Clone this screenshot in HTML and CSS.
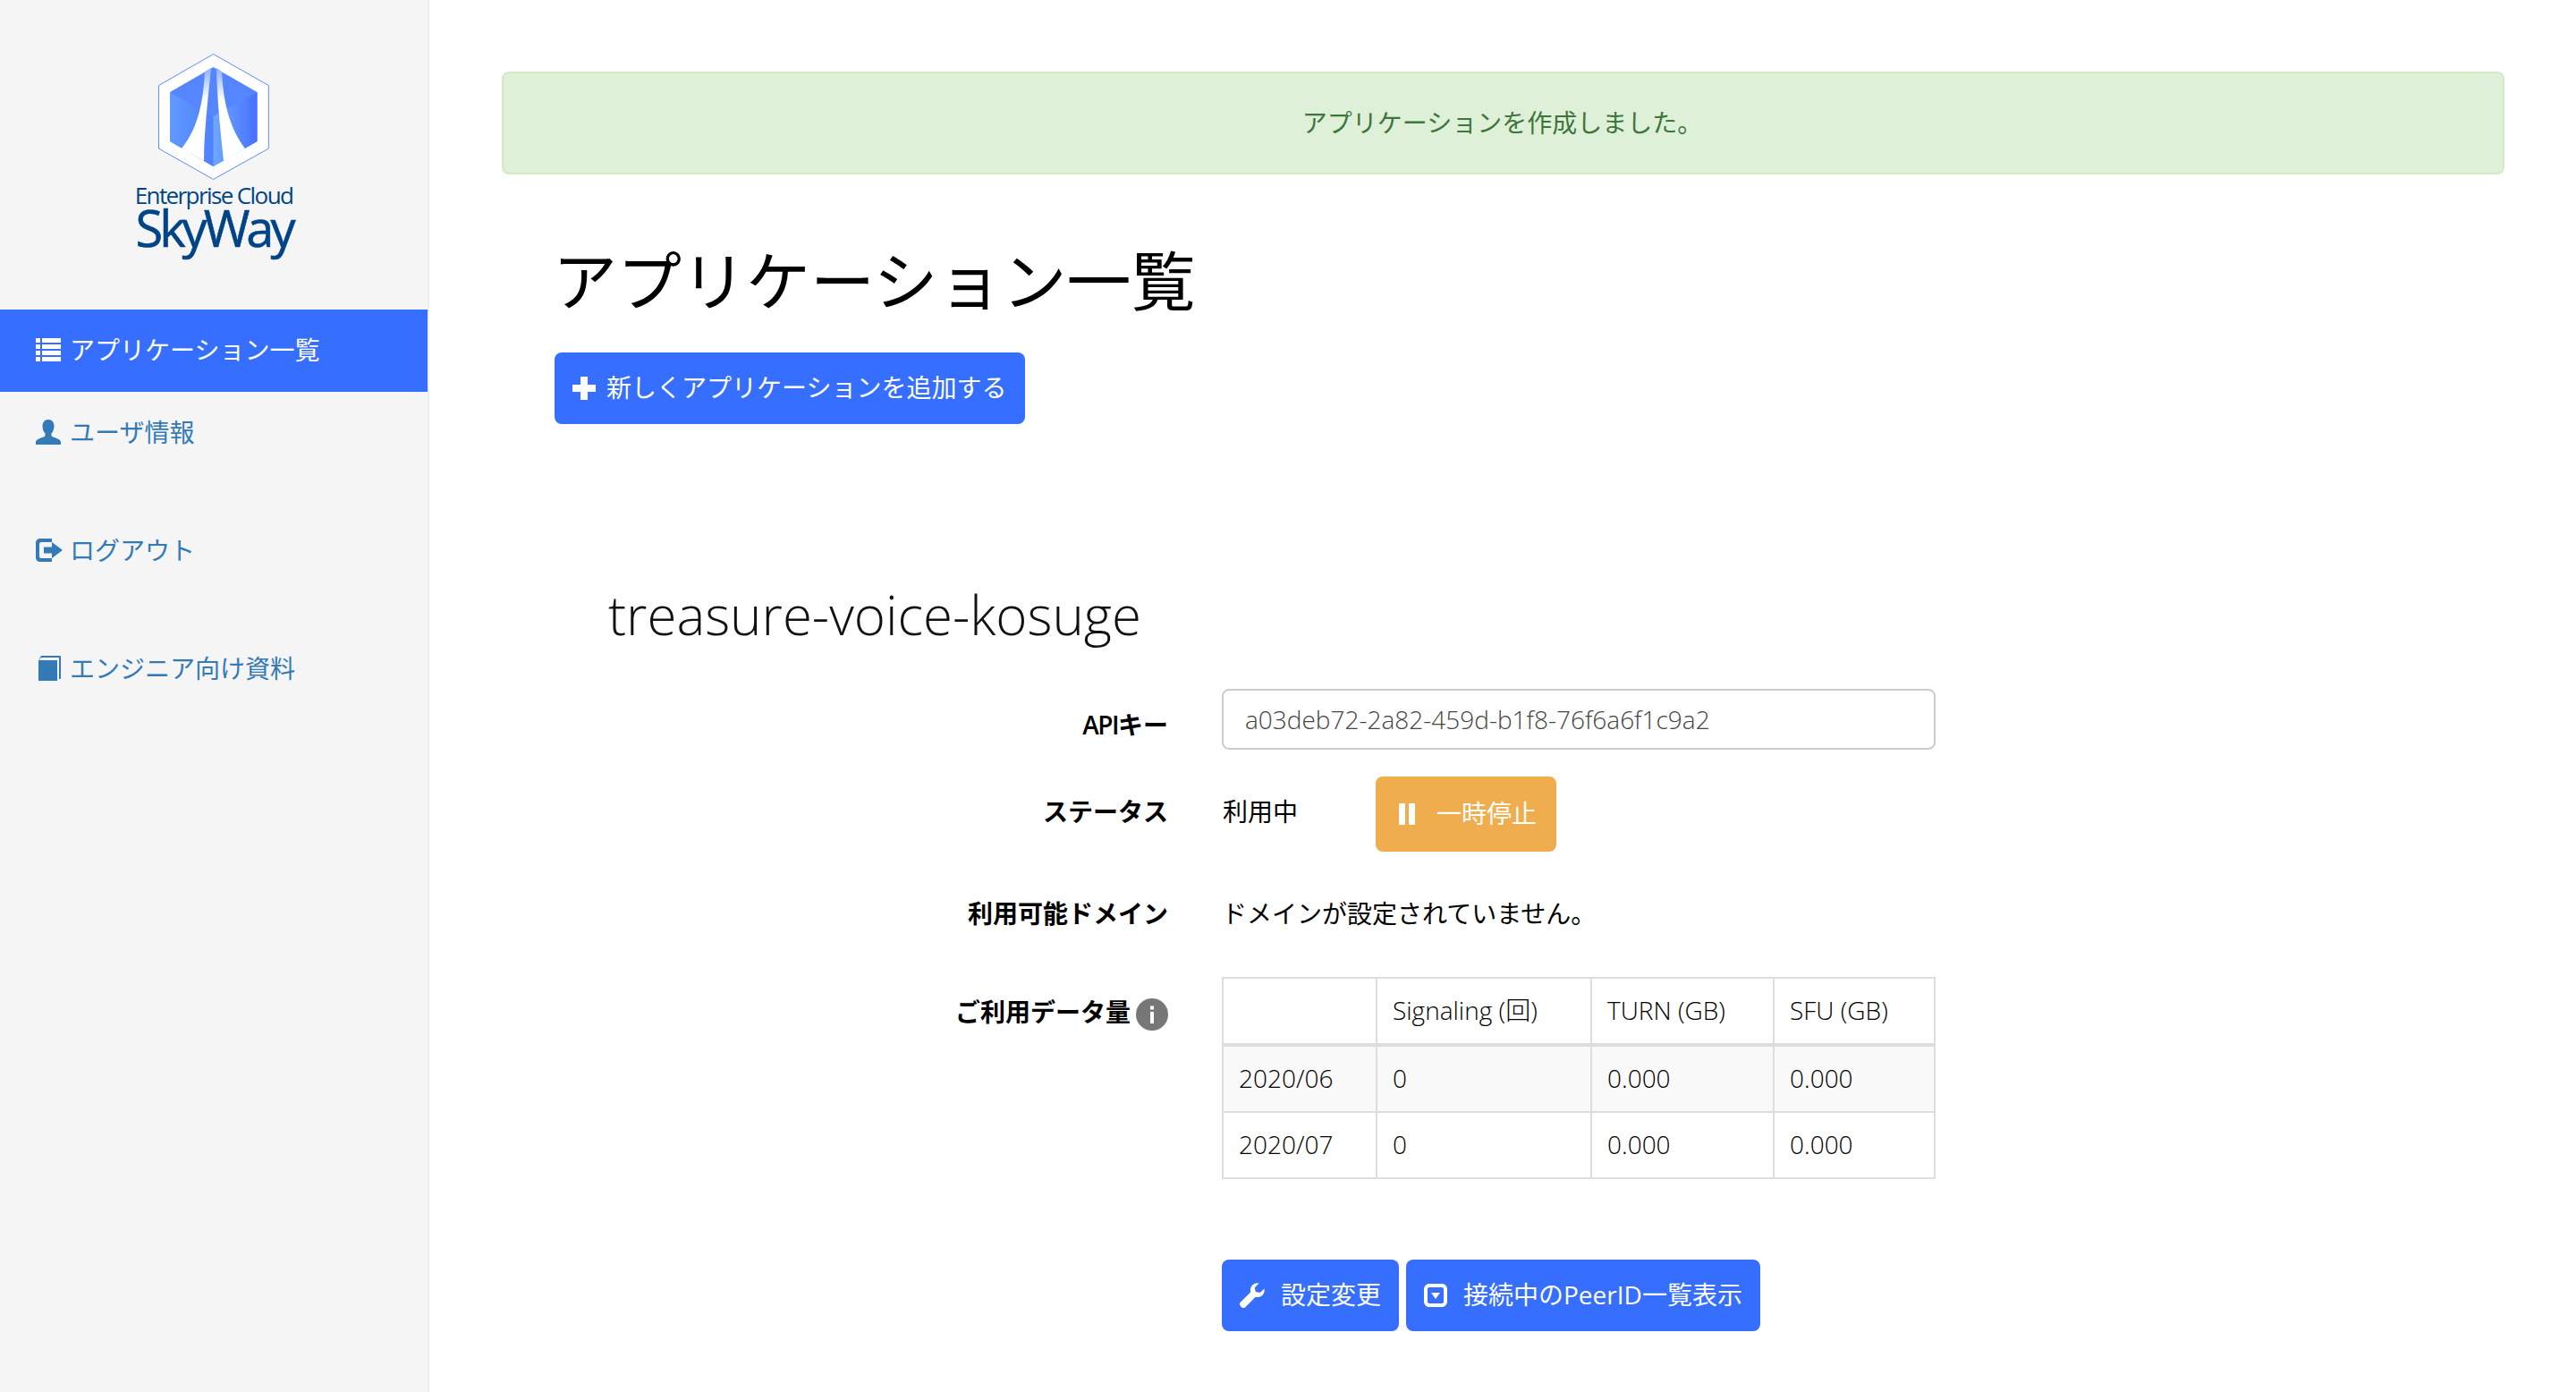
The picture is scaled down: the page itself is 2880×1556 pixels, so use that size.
FILE: index.html
```html
<!DOCTYPE html>
<html lang="ja">
<head>
    <meta charset="UTF-8">
    <title>アプリケーション一覧</title>
    <link rel="stylesheet" href="styles.css">
</head>
<body>
    <div class="app">
        <aside class="sidebar">
            <div class="logo">
                <svg class="logo-mark" viewBox="177 60 124 141">
                    <defs>
                        <linearGradient id="faceLeft" x1="0" x2="1" y1="0" y2="0">
                            <stop offset="0" stop-color="#6199ff"/>
                            <stop offset="1" stop-color="#4f80ff"/>
                        </linearGradient>
                        <linearGradient id="faceRight" x1="0" x2="1" y1="0" y2="0">
                            <stop offset="0" stop-color="#6fa8ff"/>
                            <stop offset="1" stop-color="#4670ff"/>
                        </linearGradient>
                        <linearGradient id="roadFade" x1="0" x2="0" y1="0" y2="1">
                            <stop offset="0" stop-color="#8fb0ff"/>
                            <stop offset="0.35" stop-color="#ffffff"/>
                        </linearGradient>
                    </defs>
                    <polygon points="238.5,60.5 300.3,95.5 300.3,166 238.5,200.5 177.5,166 177.5,95.5" fill="#fff" stroke="#5b8cff"/>
                    <polygon points="238.5,75 287.5,103 287.5,158 238.5,186 190,158 190,103" fill="#5585ff"/>
                    <polygon points="190,103 238.5,130 238.5,186 190,158" fill="url(#faceLeft)"/>
                    <polygon points="287.5,103 238.5,130 238.5,186 287.5,158" fill="url(#faceRight)"/>
                    <path d="M229 80 C227 118 220 145 203 166 L228 180 C228 150 232 115 236 76 Z" fill="url(#roadFade)"/>
                    <path d="M242 76 C243 118 247 150 250 180 L274 166 C260 148 250 122 248 80 Z" fill="url(#roadFade)"/>
                </svg>
                <span class="logo-sub">Enterprise Cloud</span>
                <span class="logo-name">SkyWay</span>
            </div>
            <ul class="nav">
                <li class="nav-item active">
                    <svg class="nav-icon" viewBox="0 0 28 26"><path d="M0 0h5v5H0zM0 7h5v5H0zM0 14h5v5H0zM0 21h5v5H0zM7 0h21v5H7zM7 7h21v5H7zM7 14h21v5H7zM7 21h21v5H7z"/></svg>
                    <span>アプリケーション一覧</span>
                </li>
                <li class="nav-item">
                    <svg class="nav-icon" viewBox="0 0 28 28"><path d="M14 0c4.300 0 6.500 3.200 6.500 7.500 0 3.200-1.200 6.300-3 8v2.500c0 1 4 2.200 7 3.500 2 .9 3.500 2.200 3.500 3.500V28H0v-3c0-1.300 1.500-2.600 3.500-3.500 3-1.300 7-2.500 7-3.500v-2.500c-1.800-1.700-3-4.800-3-8C7.500 3.200 9.700 0 14 0z"/></svg>
                    <span>ユーザ情報</span>
                </li>
                <li class="nav-item">
                    <svg class="nav-icon nav-icon-wide" viewBox="0 0 30 26"><path d="M5 0h13v4H6C5 4 4 5 4 6v14c0 1 1 2 2 2h12v4H5c-3 0-5-2-5-5V5c0-3 2-5 5-5z"/><path d="M9 9.500h9V4l12 9-12 9v-5.500H9z"/></svg>
                    <span>ログアウト</span>
                </li>
                <li class="nav-item">
                    <svg class="nav-icon" viewBox="0 0 28 28"><path d="M6 0h21c.600 0 1 .4 1 1v24c0 .6-.4 1-1 1h-1V2H6L3 5h21v23H3V5z"/></svg>
                    <span>エンジニア向け資料</span>
                </li>
            </ul>
        </aside>
        <main class="main">
            <div class="alert"><span class="alert-text">アプリケーションを作成しました。</span></div>
            <div class="content">
                <h1>アプリケーション一覧</h1>
                <a class="btn btn-add">
                    <svg class="btn-icon" viewBox="0 0 26 26"><path d="M9 0h8v9h9v8h-9v9H9v-9H0V9h9z"/></svg>
                    <span class="btn-text">新しくアプリケーションを追加する</span>
                </a>
                <h2>treasure-voice-kosuge</h2>
                <form class="detail">
                    <div class="row">
                        <label class="row-label label-key"><span class="latin-bold">API</span>キー</label>
                        <input class="key-input" type="text" value="a03deb72-2a82-459d-b1f8-76f6a6f1c9a2">
                    </div>
                    <div class="row">
                        <label class="row-label label-status">ステータス</label>
                        <div class="status">
                            <span class="status-text">利用中</span>
                            <a class="btn btn-pause">
                                <svg class="pause-icon" viewBox="0 0 18 24"><path d="M1 0h5c.6 0 1 .4 1 1v22c0 .6-.4 1-1 1H1c-.6 0-1-.4-1-1V1c0-.6.4-1 1-1zM12 0h5c.6 0 1 .4 1 1v22c0 .6-.4 1-1 1h-5c-.6 0-1-.4-1-1V1c0-.6.4-1 1-1z"/></svg>
                                <span class="btn-text">一時停止</span>
                            </a>
                        </div>
                    </div>
                    <div class="row row-domain">
                        <label class="row-label">利用可能ドメイン</label>
                        <div>ドメインが設定されていません。</div>
                    </div>
                    <div class="row">
                        <label class="row-label label-usage">
                            <span>ご利用データ量</span>
                            <svg class="info-icon" viewBox="0 0 36 36"><circle cx="18" cy="18" r="18" fill="#777"/><rect x="16" y="15" width="4" height="13" fill="#fff"/><rect x="16" y="8.500" width="4" height="4" fill="#fff"/></svg>
                        </label>
                        <table class="usage">
                            <thead>
                                <tr><th class="col-month"></th><th class="col-signal">Signaling (回)</th><th class="col-turn">TURN (GB)</th><th>SFU (GB)</th></tr>
                            </thead>
                            <tbody>
                                <tr class="odd"><td>2020/06</td><td>0</td><td>0.000</td><td>0.000</td></tr>
                                <tr><td>2020/07</td><td>0</td><td>0.000</td><td>0.000</td></tr>
                            </tbody>
                        </table>
                    </div>
                    <div class="row row-actions">
                        <div class="actions">
                            <a class="btn btn-action">
                                <svg class="btn-icon wrench-icon" viewBox="0 0 28 28"><path d="M27.500 6.500c.6 2.800-.2 5.600-2.300 7.500-2.100 2-5 2.500-7.500 1.700L6.500 27c-1.300 1.300-3.400 1.300-4.700 0l-.8-.8c-1.300-1.300-1.300-3.400 0-4.700L12.300 10.300c-.8-2.500-.3-5.400 1.700-7.500C16 .8 18.700 0 21.500.5L16.800 5.200l1 4.900 4.900 1z"/></svg>
                                <span class="btn-text">設定変更</span>
                            </a>
                            <a class="btn btn-action">
                                <svg class="btn-icon" viewBox="0 0 26 26"><path fill-rule="evenodd" d="M6 0h14c3.300 0 6 2.700 6 6v14c0 3.300-2.700 6-6 6H6c-3.300 0-6-2.700-6-6V6c0-3.300 2.700-6 6-6zm0 4C4.900 4 4 4.900 4 6v14c0 1.100.9 2 2 2h14c1.100 0 2-.9 2-2V6c0-1.100-.9-2-2-2zm2 6h10l-5 7z"/></svg>
                                <span class="btn-text">接続中のPeerID一覧表示</span>
                            </a>
                        </div>
                    </div>
                </form>
            </div>
        </main>
    </div>
</body>
</html>
```

FILE: styles.css
```css
* {
    box-sizing: border-box;
}
body {
    margin: 0;
    font-family: "Open Sans", "Noto Sans CJK JP", sans-serif;
    font-size: 28px;
    line-height: 40px;
    color: #000;
    background: #fff;
}
.app {
    display: flex;
    min-height: 100vh;
}

/* sidebar */
.sidebar {
    width: 480px;
    flex-shrink: 0;
    background: #f5f5f5;
    border-right: 2px solid #eee;
}
.logo {
    height: 346px;
    padding-top: 60px;
    display: flex;
    flex-direction: column;
    align-items: center;
    color: #004488;
}
.logo-mark {
    width: 124px;
    height: 141px;
    flex-shrink: 0;
}
.logo-sub {
    margin-top: 3px;
    font-size: 26px;
    line-height: 28px;
    letter-spacing: -1.6px;
}
.logo-name {
    margin-top: -3px;
    font-size: 56px;
    line-height: 50px;
    letter-spacing: -4px;
    -webkit-text-stroke: 0.6px #004488;
}
.nav {
    list-style: none;
    margin: 0;
    padding: 0;
}
.nav-item {
    display: flex;
    align-items: center;
    gap: 10px;
    height: 92px;
    padding: 0 0 3px 40px;
    margin-bottom: 40px;
    color: #337ab7;
}
.nav-item svg {
    fill: #337ab7;
}
.nav-item.active {
    margin-bottom: 0;
    color: #fff;
    background: #366eff;
}
.nav-item.active svg {
    fill: #fff;
}
.nav-icon {
    width: 28px;
    height: 28px;
    flex-shrink: 0;
}
.nav-icon-wide {
    width: 30px;
    margin-right: -2px;
}

/* main */
.main {
    flex: 1;
    padding: 80px 80px 0 81px;
}
.alert {
    height: 115px;
    display: flex;
    align-items: center;
    justify-content: center;
    color: #3c763d;
    background: #dff0d8;
    border: 2px solid #d6e9c6;
    border-radius: 8px;
}
.alert-text {
    margin: -2px 0 0 -2px;
}
.content {
    padding-left: 59px;
}
h1 {
    margin: 79px 0 41px -2px;
    font-size: 72px;
    line-height: 79px;
    font-weight: 400;
}
h2 {
    margin: 180px 0 50px 60px;
    font-size: 60px;
    line-height: 66px;
    font-weight: 300;
    color: #111;
}
.btn {
    display: inline-flex;
    align-items: center;
    height: 80px;
    color: #fff;
    background: #366eff;
    border-radius: 8px;
}
.btn svg {
    fill: #fff;
}
.btn-text {
    margin-top: -2px;
}
.btn-add {
    gap: 12px;
    padding: 0 21px 0 20px;
}
.btn-icon {
    width: 26px;
    height: 26px;
    flex-shrink: 0;
}
.wrench-icon {
    width: 28px;
    height: 28px;
}

/* detail form */
.row {
    display: grid;
    grid-template-columns: 686px 798px;
    column-gap: 60px;
    margin-bottom: 30px;
}
.row-label {
    font-weight: 700;
    text-align: right;
}
.latin-bold {
    font-weight: 600;
    letter-spacing: -1.5px;
}
.label-key {
    padding-top: 20px;
}
.label-status {
    padding-top: 19px;
}
.row-domain {
    padding: 19px 0 21px;
}
.label-usage {
    padding-top: 19px;
    display: flex;
    justify-content: flex-end;
    align-items: flex-start;
    gap: 6px;
}
.info-icon {
    width: 36px;
    height: 36px;
    margin-top: 5px;
    flex-shrink: 0;
}
.key-input {
    width: 100%;
    height: 68px;
    padding: 0 24px;
    font: inherit;
    font-weight: 300;
    color: #444;
    background: #fff;
    border: 2px solid #ccc;
    border-radius: 8px;
}
.status {
    display: flex;
    align-items: center;
}
.status-text {
    width: 171px;
    margin: -6px 0 0 1px;
}
.btn-pause {
    height: 84px;
    gap: 24px;
    padding: 0 22px 0 26px;
    background: #f0ad4e;
}
.pause-icon {
    width: 18px;
    height: 24px;
}
.usage {
    width: 100%;
    border-collapse: collapse;
    font-size: 28px;
    font-weight: 300;
    border: 2px solid #ddd;
}
.usage th, .usage td {
    padding: 15px 17px 17px;
    text-align: left;
    font-weight: 300;
    border: 2px solid #ddd;
}
.usage th {
    border-bottom-width: 4px;
}
.col-month {
    width: 172px;
}
.col-signal {
    width: 240px;
}
.col-turn {
    width: 204px;
}
.odd {
    background: #f9f9f9;
}
.row-actions {
    margin: 90px 0 0;
}
.actions {
    grid-column: 2;
    display: flex;
    gap: 8px;
}
.btn-action {
    gap: 18px;
    padding: 0 20px;
}
```
